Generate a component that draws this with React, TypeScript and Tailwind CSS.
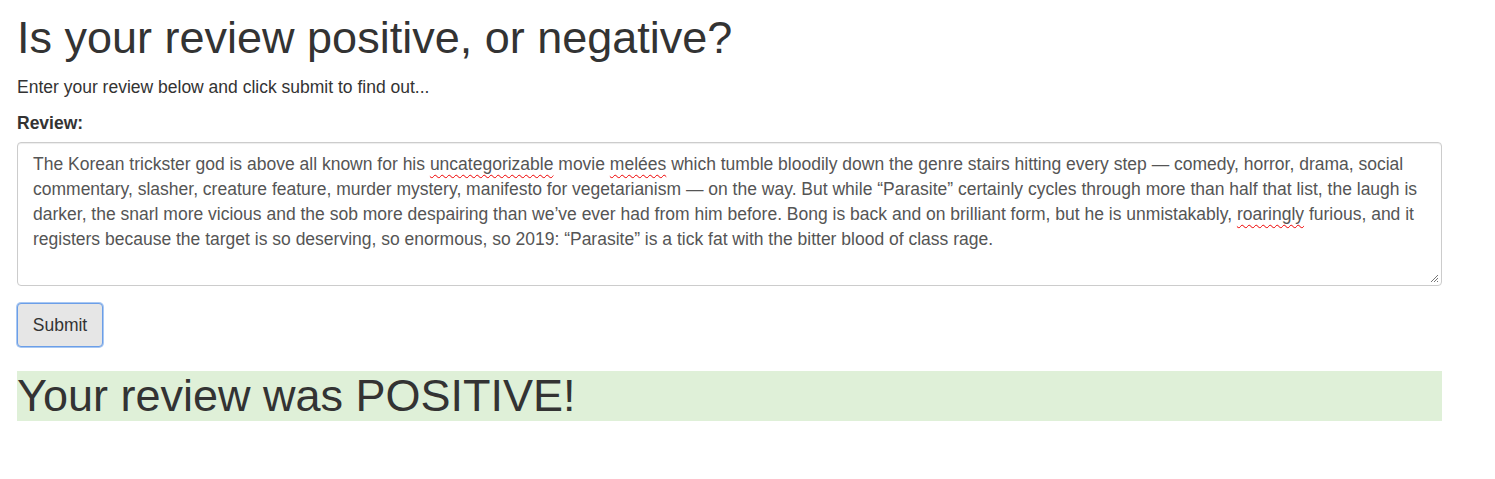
const Squiggle = ({ children }: { children: React.ReactNode }) => (
  <span className="underline decoration-wavy decoration-[#e00] decoration-1 underline-offset-[4px]">{children}</span>
);

export default function App() {
  return (
    <div className="px-[17px] text-[#333] [font-family:'Liberation_Sans',Arial,sans-serif]">
      <div className="w-[1425px]">
        <h1 className="mt-[13px] text-[45px] leading-[49.5px]">Is your review positive, or negative?</h1>
        <p className="mt-[12.5px] text-[17.5px] leading-[25px]">Enter your review below and click submit to find out...</p>
        <label className="mt-[11px] block text-[17.5px] font-bold leading-[25px]">Review:</label>
        <div className="relative mt-[6px] h-[144px] rounded-[4px] border border-[#ccc] px-[15px] pt-[8.5px] text-[17.5px] leading-[25px] text-[#555] shadow-[inset_0_1px_1px_rgba(0,0,0,0.075)]">
          The Korean trickster god is above all known for his <Squiggle>uncategorizable</Squiggle> movie <Squiggle>melées</Squiggle> which tumble bloodily down the genre stairs hitting every step — comedy, horror, drama, social commentary, slasher, creature feature, murder mystery, manifesto for vegetarianism — on the way. But while “Parasite” certainly cycles through more than half that list, the laugh is darker, the snarl more vicious and the sob more despairing than we’ve ever had from him before. Bong is back and on brilliant form, but he is unmistakably, <Squiggle>roaringly</Squiggle> furious, and it registers because the target is so deserving, so enormous, so 2019: “Parasite” is a tick fat with the bitter blood of class rage.
          <svg className="absolute bottom-[2px] right-[2px]" width="10" height="10" viewBox="0 0 10 10">
            <path d="M9 2 L2 9 M9 5 L5 9 M9 8 L8 9" stroke="#777" strokeWidth="1" />
          </svg>
        </div>
        <button className="mt-[17px] block h-[44px] w-[86px] rounded-[4px] border border-[#6b9ee8] bg-[#e6e6e6] text-[17.5px] text-[#333] shadow-[0_0_0_1px_#a9c8f2]">
          Submit
        </button>
        <div className="mt-[24px] bg-[#dff0d8] text-[45px] leading-[49.5px]">Your review was POSITIVE!</div>
      </div>
    </div>
  );
}
